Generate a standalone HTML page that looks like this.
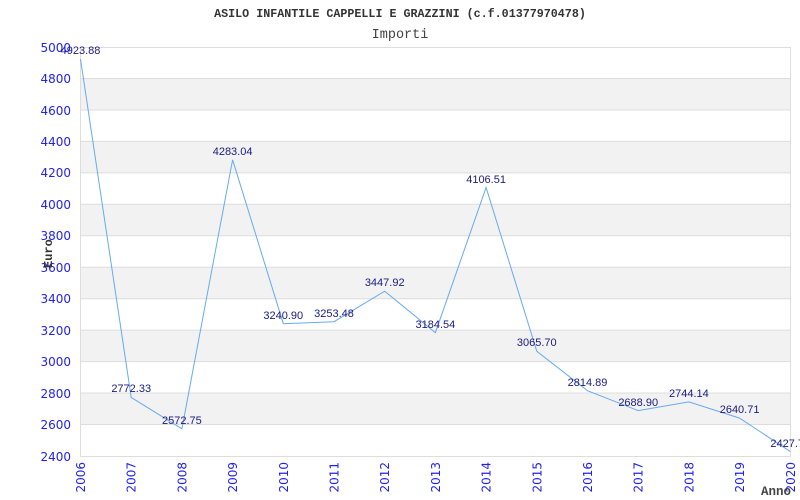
<!DOCTYPE html>
<html><head><meta charset="utf-8"><style>
html,body{margin:0;padding:0;background:#fff;width:800px;height:500px;overflow:hidden}
svg{display:block}
</style></head><body>
<svg width="800" height="500" xmlns="http://www.w3.org/2000/svg">
<rect width="800" height="500" fill="#fff"/>
<g fill="#f2f2f2">
<rect x="80.5" y="78.5" width="709.5" height="31.5"/>
<rect x="80.5" y="141.4" width="709.5" height="31.5"/>
<rect x="80.5" y="204.3" width="709.5" height="31.5"/>
<rect x="80.5" y="267.2" width="709.5" height="31.5"/>
<rect x="80.5" y="330.1" width="709.5" height="31.5"/>
<rect x="80.5" y="393" width="709.5" height="31.5"/>
</g>
<g stroke="#dddddd" stroke-width="1">
<line x1="80" x2="790" y1="47.5" y2="47.5"/>
<line x1="80" x2="790" y1="78.5" y2="78.5"/>
<line x1="80" x2="790" y1="110" y2="110"/>
<line x1="80" x2="790" y1="141.4" y2="141.4"/>
<line x1="80" x2="790" y1="172.9" y2="172.9"/>
<line x1="80" x2="790" y1="204.3" y2="204.3"/>
<line x1="80" x2="790" y1="235.8" y2="235.8"/>
<line x1="80" x2="790" y1="267.2" y2="267.2"/>
<line x1="80" x2="790" y1="298.7" y2="298.7"/>
<line x1="80" x2="790" y1="330.1" y2="330.1"/>
<line x1="80" x2="790" y1="361.6" y2="361.6"/>
<line x1="80" x2="790" y1="393" y2="393"/>
<line x1="80" x2="790" y1="424.5" y2="424.5"/>
<line x1="80" x2="790" y1="456.5" y2="456.5"/>
<line x1="80.5" x2="80.5" y1="47" y2="457"/>
<line x1="790.5" x2="790.5" y1="47" y2="457"/>
</g>
<polyline fill="none" stroke="#66aaee" stroke-width="1" points="80.5,59 131.2,397.4 181.9,428.8 232.6,159.8 283.3,323.7 334,321.7 384.7,291.2 435.4,332.6 486.1,187.5 536.8,351.3 587.5,390.7 638.2,410.6 688.9,401.9 739.6,418.1 790.3,451.6"/>
<g font-family="Liberation Sans, sans-serif" font-size="11" fill="#1a1a80" text-anchor="middle">
<text x="80.5" y="54">4923.88</text>
<text x="131.2" y="392">2772.33</text>
<text x="181.9" y="424">2572.75</text>
<text x="232.6" y="155">4283.04</text>
<text x="283.3" y="319">3240.90</text>
<text x="334" y="317">3253.48</text>
<text x="384.7" y="286">3447.92</text>
<text x="435.4" y="328">3184.54</text>
<text x="486.1" y="183">4106.51</text>
<text x="536.8" y="346">3065.70</text>
<text x="587.5" y="386">2814.89</text>
<text x="638.2" y="406">2688.90</text>
<text x="688.9" y="397">2744.14</text>
<text x="739.6" y="413">2640.71</text>
<text x="790.3" y="447">2427.73</text>
</g>
<g font-family="DejaVu Sans, sans-serif" font-size="12" fill="#2222ee" text-anchor="end">
<text x="71" y="52">5000</text>
<text x="71" y="83">4800</text>
<text x="71" y="115">4600</text>
<text x="71" y="146">4400</text>
<text x="71" y="177">4200</text>
<text x="71" y="209">4000</text>
<text x="71" y="240">3800</text>
<text x="71" y="272">3600</text>
<text x="71" y="303">3400</text>
<text x="71" y="335">3200</text>
<text x="71" y="366">3000</text>
<text x="71" y="398">2800</text>
<text x="71" y="429">2600</text>
<text x="71" y="461">2400</text>
</g>
<g font-family="DejaVu Sans, sans-serif" font-size="12" fill="#2222ee" text-anchor="end">
<text transform="translate(85,462) rotate(-90)">2006</text>
<text transform="translate(135.7,462) rotate(-90)">2007</text>
<text transform="translate(186.4,462) rotate(-90)">2008</text>
<text transform="translate(237.1,462) rotate(-90)">2009</text>
<text transform="translate(287.8,462) rotate(-90)">2010</text>
<text transform="translate(338.5,462) rotate(-90)">2011</text>
<text transform="translate(389.2,462) rotate(-90)">2012</text>
<text transform="translate(439.9,462) rotate(-90)">2013</text>
<text transform="translate(490.6,462) rotate(-90)">2014</text>
<text transform="translate(541.3,462) rotate(-90)">2015</text>
<text transform="translate(592,462) rotate(-90)">2016</text>
<text transform="translate(642.7,462) rotate(-90)">2017</text>
<text transform="translate(693.4,462) rotate(-90)">2018</text>
<text transform="translate(744.1,462) rotate(-90)">2019</text>
<text transform="translate(794.8,462) rotate(-90)">2020</text>
</g>
<text x="400" y="17" text-anchor="middle" font-family="Liberation Mono, monospace" font-weight="bold" font-size="11.7" fill="#333">ASILO INFANTILE CAPPELLI E GRAZZINI (c.f.01377970478)</text>
<text x="400" y="38" text-anchor="middle" font-family="Liberation Mono, monospace" font-size="13.5" fill="#444">Importi</text>
<text transform="translate(52,268) rotate(-90)" font-family="Liberation Mono, monospace" font-weight="bold" font-size="12" fill="#333">Euro</text>
<text x="761" y="495" font-family="Liberation Mono, monospace" font-weight="bold" font-size="12.5" fill="#444">Anno</text>
</svg>
</body></html>
